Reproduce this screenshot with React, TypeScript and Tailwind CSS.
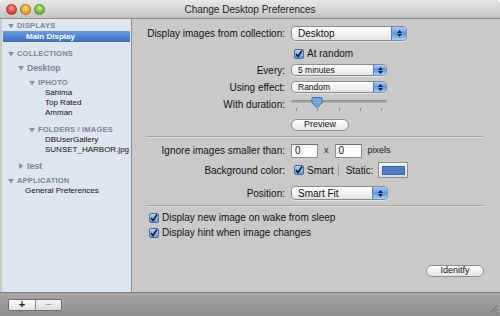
import React from 'react';

const font = { fontFamily: '"Liberation Sans", Arial, sans-serif' };

function Tri({ open = true }: { open?: boolean }) {
  return (
    <svg width="6" height="6" viewBox="0 0 6 6" className="shrink-0">
      {open ? <path d="M0 1 L6 1 L3 5.5 Z" fill="#8a93a2" /> : <path d="M1 0 L5.5 3 L1 6 Z" fill="#8a93a2" />}
    </svg>
  );
}

function Header({ label, pl, open = true, caps = true, className = '' }: { label: string; pl: string; open?: boolean; caps?: boolean; className?: string }) {
  return (
    <div className={`flex items-center h-[10px] gap-[3px] ${pl} ${className}`}>
      <Tri open={open} />
      <span className={`font-bold text-[#7b8494] ${caps ? 'text-[7.5px] tracking-[0.2px]' : 'text-[8.5px]'}`}>{label}</span>
    </div>
  );
}

function Leaf({ label, pl }: { label: string; pl: string }) {
  return <div className={`flex items-center h-[10px] text-[8px] text-[#111] ${pl}`}>{label}</div>;
}

function Stepper({ big = false }: { big?: boolean }) {
  return (
    <div className={`flex flex-col items-center justify-center gap-[1px] h-full ${big ? 'w-[15px]' : 'w-[13px]'} rounded-r-[4px] border-l border-[#5a7fb5] bg-gradient-to-b from-[#a9cbf3] via-[#5a98e6] to-[#9fd0fb]`}>
      <svg width="5" height="3" viewBox="0 0 5 3"><path d="M0 3 L2.5 0 L5 3 Z" fill="#10213a" /></svg>
      <svg width="5" height="3" viewBox="0 0 5 3"><path d="M0 0 L5 0 L2.5 3 Z" fill="#10213a" /></svg>
    </div>
  );
}

function Popup({ value, w, h, big = false }: { value: string; w: string; h: string; big?: boolean }) {
  return (
    <div className={`flex items-stretch ${w} ${h} rounded-[4px] border border-[#8c8c8c] bg-gradient-to-b from-white via-[#f3f3f3] to-[#e2e2e2] shadow-[0_1px_0_rgba(255,255,255,0.5)]`}>
      <span className={`flex-1 flex items-center pl-[6px] text-[#111] ${big ? 'text-[10px]' : 'text-[8.5px]'}`}>{value}</span>
      <Stepper big={big} />
    </div>
  );
}

function Check({ label, className = '' }: { label?: string; className?: string }) {
  return (
    <div className={`flex items-center gap-[3px] ${className}`}>
      <div className="flex items-center justify-center w-[10px] h-[10px] rounded-[2px] border border-[#4d6b95] bg-gradient-to-b from-[#b7d6f7] to-[#5d9ae0]">
        <svg width="8" height="8" viewBox="0 0 8 8"><path d="M1 4 L3 6.5 L7 0.5" stroke="#0b1a30" strokeWidth="1.6" fill="none" /></svg>
      </div>
      {label && <span className="text-[10px] text-[#111]">{label}</span>}
    </div>
  );
}

function Label({ children }: { children: React.ReactNode }) {
  return <div className="w-[159px] pr-[6px] text-right text-[10px] text-[#111] whitespace-nowrap">{children}</div>;
}

function Pill({ label, w }: { label: string; w: string }) {
  return (
    <div className={`flex items-center justify-center ${w} h-[12px] rounded-full border border-[#8f8f8f] bg-gradient-to-b from-white to-[#e4e4e4] text-[9px] text-[#111]`}>
      {label}
    </div>
  );
}

function Field({ value }: { value: string }) {
  return (
    <div className="flex items-center w-[27px] h-[14px] bg-white border border-[#8f8f8f] border-t-[#6f6f6f] pl-[3px] text-[10px] text-[#111]">{value}</div>
  );
}

function Sep() {
  return <div className="ml-[14px] mr-[16px] h-[2px] border-t border-[#a3a3a3] border-b border-b-[#dcdcdc]" />;
}

export default function App() {
  return (
    <div className="w-[500px] h-[316px] bg-white" style={font}>
      <div className="w-full h-full flex flex-col rounded-t-[5px] overflow-hidden bg-[#c9c9c9]">
        {/* title bar */}
        <div className="relative flex items-center h-[19px] bg-gradient-to-b from-[#e8e8e8] to-[#c4c4c4] border-b border-[#8f8f8f]">
          <div className="flex items-center gap-[3px] pl-[6px]">
            <span className="w-[11px] h-[11px] rounded-full border border-[#9b3a3a] bg-[radial-gradient(circle_at_50%_35%,#ff9a94,#e0302b_70%)]" />
            <span className="w-[11px] h-[11px] rounded-full border border-[#a0702a] bg-[radial-gradient(circle_at_50%_35%,#ffd98a,#e89a1c_70%)]" />
            <span className="w-[11px] h-[11px] rounded-full border border-[#4e8a2e] bg-[radial-gradient(circle_at_50%_35%,#c4f29a,#5cb82c_70%)]" />
          </div>
          <div className="absolute inset-0 flex items-center justify-center text-[10px] text-[#222]">Change Desktop Preferences</div>
        </div>

        {/* body */}
        <div className="flex flex-1 min-h-0">
          {/* sidebar */}
          <div className="w-[130px] ml-[2px] bg-[#dfe5ed] border-r border-[#8e8e8e] flex flex-col pt-[2px]">
            <Header label="DISPLAYS" pl="pl-[6px]" />
            <div className="flex items-center h-[11px] mx-[1px] pl-[23px] text-[8px] font-bold text-white bg-gradient-to-b from-[#6a9ae0] to-[#3a6ec4]">Main Display</div>
            <Header label="COLLECTIONS" pl="pl-[6px]" className="mt-[7px]" />
            <Header label="Desktop" pl="pl-[16px]" caps={false} className="mt-[4px]" />
            <Header label="IPHOTO" pl="pl-[27px]" className="mt-[5px]" />
            <Leaf label="Sahlma" pl="pl-[43px]" />
            <Leaf label="Top Rated" pl="pl-[43px]" />
            <Leaf label="Amman" pl="pl-[43px]" />
            <Header label="FOLDERS / IMAGES" pl="pl-[27px]" className="mt-[7px]" />
            <Leaf label="DBUserGallery" pl="pl-[43px]" />
            <Leaf label="SUNSET_HARBOR.jpg" pl="pl-[43px]" />
            <Header label="test" pl="pl-[16px]" open={false} caps={false} className="mt-[6px]" />
            <Header label="APPLICATION" pl="pl-[6px]" className="mt-[5px]" />
            <Leaf label="General Preferences" pl="pl-[23px]" />
          </div>

          {/* main */}
          <div className="flex-1 flex flex-col pt-[7px] pb-[15px]">
            <div className="flex items-center h-[15px]">
              <Label>Display images from collection:</Label>
              <Popup value="Desktop" w="w-[116px]" h="h-[15px]" big />
            </div>
            <div className="flex items-center h-[11px] mt-[7px]">
              <div className="w-[159px]" />
              <Check label="At random" className="ml-[3px]" />
            </div>
            <div className="flex items-center h-[12px] mt-[5px]">
              <Label>Every:</Label>
              <Popup value="5 minutes" w="w-[96px]" h="h-[12px]" />
            </div>
            <div className="flex items-center h-[12px] mt-[5px]">
              <Label>Using effect:</Label>
              <Popup value="Random" w="w-[96px]" h="h-[12px]" />
            </div>
            <div className="flex items-start h-[16px] mt-[4px]">
              <Label>With duration:</Label>
              <div className="relative w-[96px] h-[16px]">
                <div className="absolute left-0 right-0 top-[3px] h-[3px] rounded-full bg-gradient-to-b from-[#8a8a8a] to-[#b5b5b5]" />
                <svg className="absolute left-[20px] top-0" width="12" height="11" viewBox="0 0 12 11">
                  <path d="M1 1 Q1 0.5 1.5 0.5 L10.5 0.5 Q11 0.5 11 1 L11 6 L6 10.5 L1 6 Z" fill="#6fa6ea" stroke="#4a6f9f" />
                </svg>
                <div className="absolute left-0 right-0 top-[11px] flex justify-between px-[5px]">
                  {[0, 1, 2, 3, 4].map((i) => (
                    <div key={i} className="w-px h-[3px] bg-[#8a8a8a]" />
                  ))}
                </div>
              </div>
            </div>
            <div className="flex items-center h-[12px] mt-[6px]">
              <div className="w-[159px]" />
              <Pill label="Preview" w="w-[58px]" />
            </div>
            <div className="mt-[5px]"><Sep /></div>
            <div className="flex items-center h-[15px] mt-[5px]">
              <Label>Ignore images smaller than:</Label>
              <Field value="0" />
              <span className="ml-[6px] mr-[6px] text-[9px] text-[#222]">x</span>
              <Field value="0" />
              <span className="ml-[6px] text-[9px] text-[#222]">pixels</span>
            </div>
            <div className="flex items-center h-[16px] mt-[4px]">
              <Label>Background color:</Label>
              <Check label="Smart" className="ml-[3px]" />
              <div className="ml-[4px] w-px h-[12px] bg-[#9a9a9a]" />
              <span className="ml-[7px] text-[10px] text-[#111]">Static:</span>
              <div className="ml-[5px] flex items-center justify-center w-[30px] h-[16px] border border-[#8f8f8f] bg-gradient-to-b from-[#f4f4f4] to-[#dcdcdc]">
                <div className="w-[23px] h-[9px] bg-[#4f7fc2] border border-[#3d63a0]" />
              </div>
            </div>
            <div className="flex items-center h-[14px] mt-[8px]">
              <Label>Position:</Label>
              <Popup value="Smart Fit" w="w-[97px]" h="h-[14px]" big />
            </div>
            <div className="mt-[5px]"><Sep /></div>
            <Check label="Display new image on wake from sleep" className="ml-[17px] mt-[5px] h-[11px]" />
            <Check label="Display hint when image changes" className="ml-[17px] mt-[4px] h-[11px]" />
            <div className="mt-auto flex justify-end pr-[16px]">
              <Pill label="Idenitfy" w="w-[58px]" />
            </div>
          </div>
        </div>

        {/* bottom bar */}
        <div className="relative flex items-center h-[24px] bg-gradient-to-b from-[#a8a8a8] to-[#8d8d8d] border-t border-[#7a7a7a] pl-[8px]">
          <div className="flex h-[12px] rounded-[2px] border border-[#6e6e6e] overflow-hidden">
            <div className="flex items-center justify-center w-[26px] bg-gradient-to-b from-white to-[#e0e0e0] text-[11px] font-bold text-[#222] leading-none">+</div>
            <div className="flex items-center justify-center w-[26px] border-l border-[#8a8a8a] bg-gradient-to-b from-[#f4f4f4] to-[#dcdcdc] text-[11px] text-[#999] leading-none">−</div>
          </div>
          <svg className="absolute right-[2px] bottom-[2px]" width="10" height="10" viewBox="0 0 10 10">
            <path d="M9 2 L2 9 M9 5 L5 9 M9 8 L8 9" stroke="#5e5e5e" strokeWidth="0.8" />
          </svg>
        </div>
      </div>
    </div>
  );
}
